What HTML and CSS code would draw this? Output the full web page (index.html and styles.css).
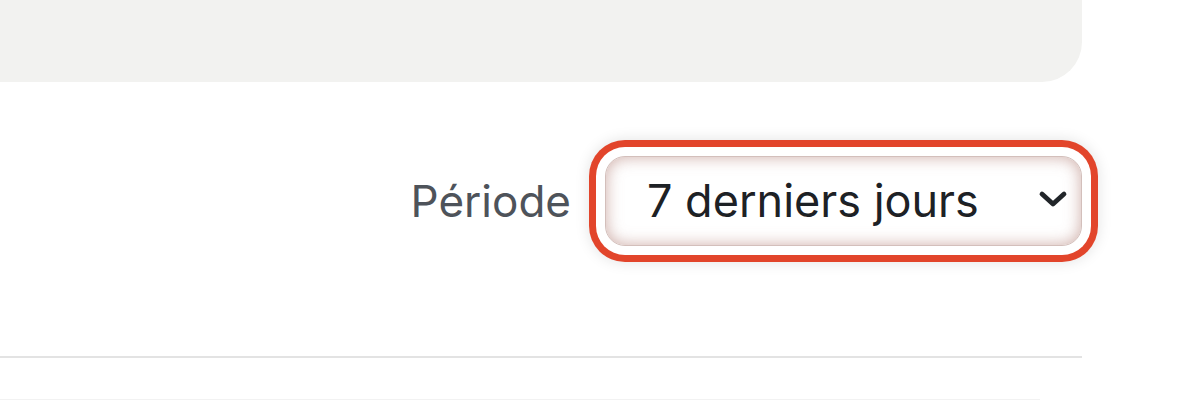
FILE: index.html
```html
<!DOCTYPE html>
<html lang="fr">
<head>
<meta charset="utf-8">
<title>Période</title>
<link rel="stylesheet" href="styles.css">
</head>
<body>
<div class="panel">
  <div class="card"></div>
  <div class="filters">
    <label class="filter-label" for="period">Période</label>
    <div class="select" id="period" role="combobox" tabindex="0" aria-expanded="false">
      <span class="select-value">7 derniers jours</span>
      <svg class="chevron" width="30" height="18" viewBox="0 0 30 18" aria-hidden="true">
        <polyline points="4,4 15,14 26,4" fill="none" stroke="#212529" stroke-width="4.8" stroke-linecap="round" stroke-linejoin="round"/>
      </svg>
    </div>
  </div>
  <div class="divider"></div>
  <div class="table-top"></div>
</div>
</body>
</html>
```

FILE: styles.css
```css
html, body {
  margin: 0;
  padding: 0;
  background: #ffffff;
}

body {
  font-family: Inter, "Noto Sans", "Liberation Sans", sans-serif;
  width: 1200px;
  height: 400px;
  overflow: hidden;
}

.panel {
  width: 1082px;
}

.card {
  height: 82px;
  background: #f2f2f0;
  border-bottom-right-radius: 40px;
}

.filters {
  display: flex;
  align-items: center;
  justify-content: flex-end;
  gap: 34px;
  margin-top: 74px;
  height: 90px;
}

.filter-label {
  font-size: 44px;
  color: #4e535a;
  line-height: 1;
}

.select {
  box-sizing: border-box;
  width: 477px;
  height: 90px;
  display: flex;
  align-items: center;
  justify-content: space-between;
  padding: 0 13px 0 41px;
  border: 1px solid #d3bfbb;
  border-radius: 20px;
  background: #ffffff;
  box-shadow:
    inset 0 0 16px rgba(165, 105, 95, 0.55),
    0 0 0 9px #ffffff,
    0 0 0 16px #e2452b,
    0 0 14px 17px rgba(0, 0, 0, 0.10);
}

.select-value {
  font-size: 45px;
  color: #1d2125;
  line-height: 1;
  margin-top: -1px;
}

.chevron {
  display: block;
  margin-top: -4px;
}

.divider {
  margin-top: 110px;
  height: 2px;
  background: #e3e3e3;
}

.table-top {
  margin-top: 41px;
  width: 1040px;
  height: 1px;
  background: #f2f2f2;
}
```
